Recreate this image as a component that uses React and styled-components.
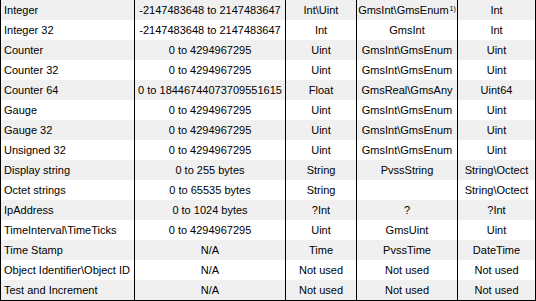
import React from "react";
import styled, { createGlobalStyle } from "styled-components";

const Global = createGlobalStyle`
  html, body { margin: 0; padding: 0; background: #fff; }
  body { font-family: "Liberation Sans", Arial, sans-serif; }
`;

const Table = styled.div`
  width: 536px;
  box-sizing: border-box;
  border-left: 1px solid #000;
  border-bottom: 1px solid #000;
  display: grid;
  grid-template-columns: 134px 151px 71px 101px 78px;
  font-size: 11px;
  color: #000;
`;

const Row = styled.div`
  display: contents;
`;

const Cell = styled.div`
  box-sizing: border-box;
  height: 20px;
  display: flex;
  align-items: center;
  justify-content: ${(p) => (p.$left ? "flex-start" : "center")};
  padding-left: ${(p) => (p.$left ? "3px" : "0")};
  border-right: 1px solid #000;
  background: ${(p) => (p.$shade ? "#f0f0f0" : "#ffffff")};
  white-space: nowrap;
  overflow: hidden;
`;

const Sup = styled.sup`
  font-size: 7px;
  line-height: 0;
  position: relative;
  top: -1px;
  margin-left: 1px;
`;

const rows = [
  ["Integer", "-2147483648 to 2147483647", "Int\\Uint", "GmsInt\\GmsEnum", "Int", true],
  ["Integer 32", "-2147483648 to 2147483647", "Int", "GmsInt", "Int"],
  ["Counter", "0 to 4294967295", "Uint", "GmsInt\\GmsEnum", "Uint"],
  ["Counter 32", "0 to 4294967295", "Uint", "GmsInt\\GmsEnum", "Uint"],
  ["Counter 64", "0 to 18446744073709551615", "Float", "GmsReal\\GmsAny", "Uint64"],
  ["Gauge", "0 to 4294967295", "Uint", "GmsInt\\GmsEnum", "Uint"],
  ["Gauge 32", "0 to 4294967295", "Uint", "GmsInt\\GmsEnum", "Uint"],
  ["Unsigned 32", "0 to 4294967295", "Uint", "GmsInt\\GmsEnum", "Uint"],
  ["Display string", "0 to 255 bytes", "String", "PvssString", "String\\Octect"],
  ["Octet strings", "0 to 65535 bytes", "String", "", "String\\Octect"],
  ["IpAddress", "0 to 1024 bytes", "?Int", "?", "?Int"],
  ["TimeInterval\\TimeTicks", "0 to 4294967295", "Uint", "GmsUint", "Uint"],
  ["Time Stamp", "N/A", "Time", "PvssTime", "DateTime"],
  ["Object Identifier\\Object ID", "N/A", "Not used", "Not used", "Not used"],
  ["Test and Increment", "N/A", "Not used", "Not used", "Not used"],
];

export default function App() {
  return (
    <>
      <Global />
      <Table>
        {rows.map((r, i) => {
          const shade = i % 2 === 0;
          return (
            <Row key={i}>
              <Cell $left $shade={shade}>{r[0]}</Cell>
              <Cell $shade={shade}>{r[1]}</Cell>
              <Cell $shade={shade}>{r[2]}</Cell>
              <Cell $shade={shade}>
                {r[3]}
                {r[5] && <Sup>1)</Sup>}
              </Cell>
              <Cell $shade={shade}>{r[4]}</Cell>
            </Row>
          );
        })}
      </Table>
    </>
  );
}
